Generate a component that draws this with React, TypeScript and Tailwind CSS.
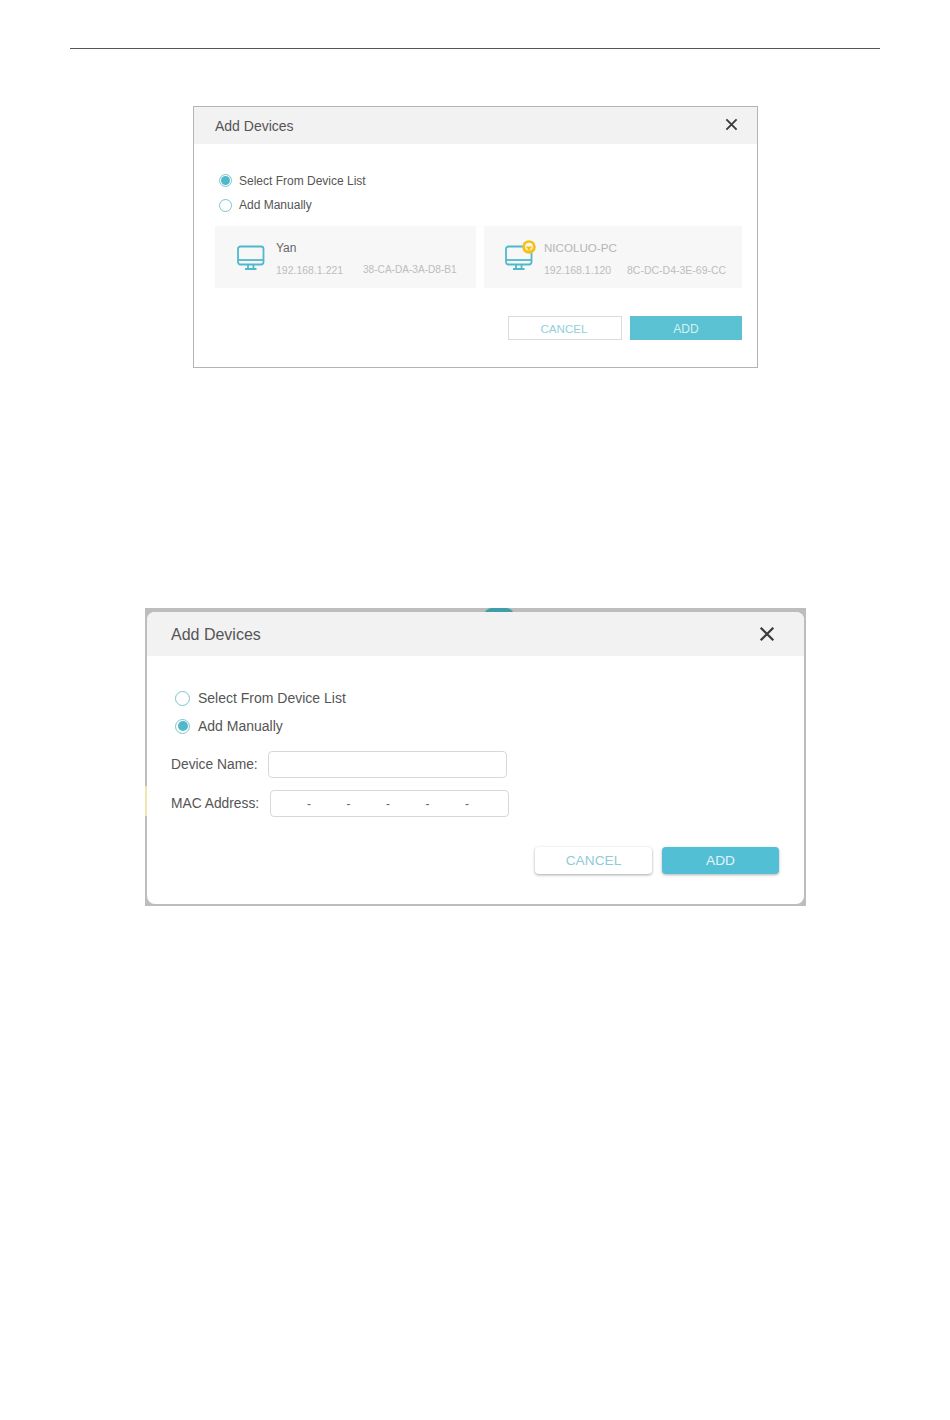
const font = { fontFamily: '"Liberation Sans", Arial, sans-serif' };

function Radio({ checked, big }: { checked?: boolean; big?: boolean }) {
  return (
    <span className={`flex shrink-0 items-center justify-center rounded-full border border-[#7cc5cf] bg-white ${big ? "h-[15px] w-[15px]" : "h-[13px] w-[13px]"}`}>
      {checked && <span className={`rounded-full bg-[#4fb9cb] ${big ? "h-[10px] w-[10px]" : "h-[9px] w-[9px]"}`} />}
    </span>
  );
}

function Monitor({ badge }: { badge?: boolean }) {
  return (
    <span className="relative mt-[2px] block h-[26px] w-[28px] shrink-0">
      <svg width="28" height="26" viewBox="0 0 28 26" fill="none" stroke="#4fb9cb" strokeWidth="1.8">
        <rect x="1" y="1.5" width="25.5" height="18" rx="2.5" />
        <path d="M1 15H26.5" />
        <path d="M11 19.5V23.5M16.5 19.5V23.5M8 24H19.5" />
      </svg>
      {badge && (
        <svg className="absolute right-[-3px] top-[-5px]" width="14" height="14" viewBox="0 0 14 14">
          <circle cx="7" cy="7" r="6.8" fill="#f2c21a" />
          <circle cx="7" cy="6.6" r="3.9" fill="#f8f6e8" />
          <path d="M3.8 6.6L7 11L10.2 6.6Z" fill="#f2c21a" />
        </svg>
      )}
    </span>
  );
}

function DeviceCard({ name, ip, mac, badge, nameClass, nameSize, ipWidth, macSize, width, pl, gap }: { name: string; ip: string; mac: string; badge?: boolean; nameClass: string; nameSize: string; ipWidth: string; macSize: string; width: string; pl: string; gap: string }) {
  return (
    <div className={`flex h-[62px] items-center bg-[#f7f7f7] ${width} ${pl}`}>
      <Monitor badge={badge} />
      <div className={`${gap} flex flex-col pt-[4px]`}>
        <span className={`leading-[14px] ${nameSize} ${nameClass}`}>{name}</span>
        <span className="mt-[8px] flex text-[10.5px] leading-[14px] text-[#bdbdbd]">
          <span className={ipWidth}>{ip}</span>
          <span className={macSize}>{mac}</span>
        </span>
      </div>
    </div>
  );
}

function CloseIcon({ size }: { size: number }) {
  return (
    <svg width={size} height={size} viewBox="0 0 14 14" stroke="#3a3a3a" strokeWidth="2" fill="none">
      <path d="M1.5 1.5L12.5 12.5M12.5 1.5L1.5 12.5" />
    </svg>
  );
}

function FirstDialog() {
  return (
    <section className="ml-[193px] mt-[57px] h-[262px] w-[565px] border border-[#b4b4b4] bg-white">
      <header className="flex h-[37px] items-center justify-between bg-[#f2f2f2] pl-[21px] pr-[19px]">
        <span className="pt-[2px] text-[14px] text-[#555]">Add Devices</span>
        <span className="mb-[2px] block">
          <CloseIcon size={13} />
        </span>
      </header>
      <div className="pl-[25px] pt-[29px]">
        <label className="flex h-[14px] items-center gap-[7px] text-[12px] text-[#555]">
          <Radio checked />
          <span className="pt-[1px]">Select From Device List</span>
        </label>
        <label className="mt-[11px] flex h-[14px] items-center gap-[7px] text-[12px] text-[#555]">
          <Radio />
          <span>Add Manually</span>
        </label>
      </div>
      <div className="ml-[21px] mt-[14px] flex gap-[8px]">
        <DeviceCard name="Yan" ip="192.168.1.221" mac="38-CA-DA-3A-D8-B1" nameClass="text-[#666]" nameSize="text-[12px]" ipWidth="w-[87px]" macSize="text-[10.1px]" width="w-[261px]" pl="pl-[22px]" gap="ml-[11px]" />
        <DeviceCard name="NICOLUO-PC" ip="192.168.1.120" mac="8C-DC-D4-3E-69-CC" nameClass="text-[#b5b5b5]" nameSize="text-[11.6px]" ipWidth="w-[83px]" macSize="text-[10.5px]" badge width="w-[258px]" pl="pl-[21px]" gap="ml-[11px]" />
      </div>
      <div className="ml-[314px] mt-[28px] flex gap-[8px]">
        <button className="h-[24px] w-[114px] border border-[#dcdcdc] bg-white pr-[2px] pt-[2px] text-[11.6px] text-[#8fd0da]">CANCEL</button>
        <button className="h-[24px] w-[112px] bg-[#5bc2d4] pt-[2px] text-[12px] text-[#d5f0f4]">ADD</button>
      </div>
    </section>
  );
}

function SecondDialog() {
  return (
    <section className="relative ml-[145px] mt-[240px] h-[298px] w-[661px] overflow-hidden bg-[#bdbdbd] pb-[2px] pl-[2px] pr-[2px] pt-[4px]">
      <span className="absolute left-[339px] top-0 h-[8px] w-[30px] rounded-t-full bg-[#3f9ea8]" />
      <span className="absolute left-0 top-[178px] h-[30px] w-[2px] bg-[#f0e6b0]" />
      <div className="relative h-full overflow-hidden rounded-[8px] bg-white">
        <header className="flex h-[44px] items-center justify-between bg-[#f2f2f2] pl-[24px] pr-[29px]">
          <span className="pt-[2px] text-[16px] text-[#555]">Add Devices</span>
          <CloseIcon size={16} />
        </header>
        <div className="pl-[28px] pt-[34px]">
          <label className="flex h-[16px] items-center gap-[8px] text-[14px] text-[#555]">
            <Radio big />
            <span>Select From Device List</span>
          </label>
          <label className="mt-[12px] flex h-[16px] items-center gap-[8px] text-[14px] text-[#555]">
            <Radio checked big />
            <span>Add Manually</span>
          </label>
        </div>
        <div className="mt-[17px] flex items-center pl-[24px]">
          <span className="w-[97px] text-[13.8px] leading-[27px] text-[#555]">Device Name:</span>
          <span className="h-[27px] w-[239px] rounded-[4px] border border-[#d8d8d8]" />
        </div>
        <div className="mt-[12px] flex items-center pl-[24px]">
          <span className="w-[99px] text-[13.8px] leading-[27px] text-[#555]">MAC Address:</span>
          <span className="flex h-[27px] w-[239px] items-center rounded-[4px] border border-[#d8d8d8] pl-[36px] text-[12px] text-[#666]">
            {["a", "b", "c", "d", "e"].map((k) => (
              <span key={k} className="w-[39.5px]">-</span>
            ))}
          </span>
        </div>
        <div className="ml-[388px] mt-[30px] flex gap-[10px]">
          <button className="h-[27px] w-[117px] rounded-[4px] bg-white pt-[1px] text-[13.7px] text-[#8fcbd6] shadow-[0_1px_3px_rgba(0,0,0,0.35)]">CANCEL</button>
          <button className="h-[27px] w-[117px] rounded-[4px] bg-[#53bfd5] pt-[1px] text-[13.7px] text-[#e3f5f8] shadow-[0_1px_3px_rgba(0,0,0,0.3)]">ADD</button>
        </div>
      </div>
    </section>
  );
}

export default function App() {
  return (
    <main className="h-[1420px] w-[950px] bg-white pt-[48px]" style={font}>
      <div className="ml-[70px] h-px w-[810px] bg-[#555]" />
      <FirstDialog />
      <SecondDialog />
    </main>
  );
}
